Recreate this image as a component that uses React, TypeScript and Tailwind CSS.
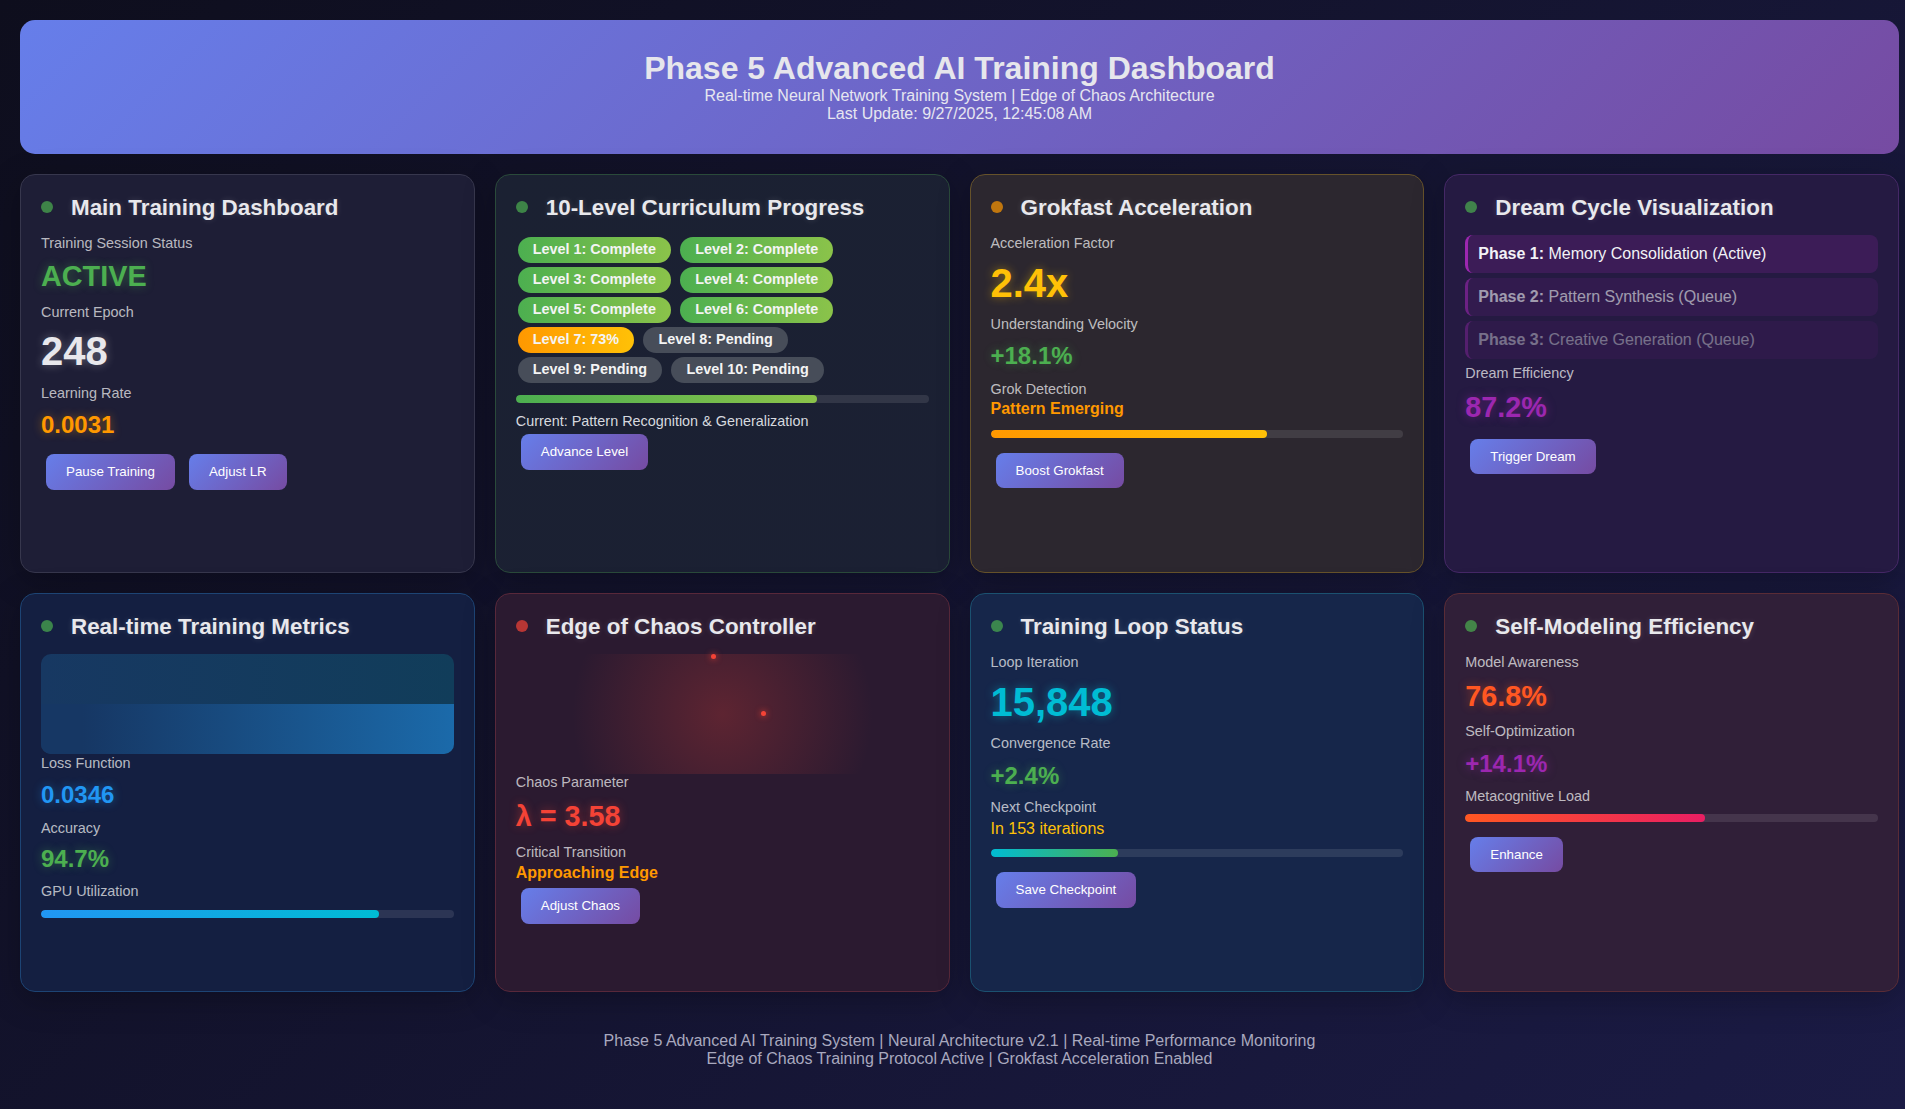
import type { ReactNode } from 'react'

const glow = {
  green: 'text-[#4caf50] [text-shadow:0_0_10px_rgba(76,175,80,0.45)]',
  white: 'text-[#e8e8ec] [text-shadow:0_0_10px_rgba(255,255,255,0.3)]',
  orange: 'text-[#ff9800] [text-shadow:0_0_10px_rgba(255,152,0,0.45)]',
  yellow: 'text-[#ffc107] [text-shadow:0_0_10px_rgba(255,193,7,0.45)]',
  purple: 'text-[#9c27b0] [text-shadow:0_0_10px_rgba(156,39,176,0.5)]',
  blue: 'text-[#2196f3] [text-shadow:0_0_10px_rgba(33,150,243,0.45)]',
  red: 'text-[#f44336] [text-shadow:0_0_10px_rgba(244,67,54,0.45)]',
  cyan: 'text-[#00bcd4] [text-shadow:0_0_10px_rgba(0,188,212,0.45)]',
  deepOrange: 'text-[#ff5722] [text-shadow:0_0_10px_rgba(255,87,34,0.45)]',
}

function Card({ tone, dot, title, children }: { tone: string; dot: string; title: string; children: ReactNode }) {
  return (
    <div className={`h-[399px] rounded-[15px] border p-5 shadow-[0_8px_32px_rgba(0,0,0,0.25)] ${tone}`}>
      <div className="flex items-center gap-[18px] mb-[15px]">
        <span className={`w-3 h-3 rounded-full opacity-70 ${dot}`} />
        <h3 className="text-[22.4px] leading-[1.15] font-bold text-[#e8e8ec] [text-shadow:0_0_6px_rgba(255,255,255,0.15)]">{title}</h3>
      </div>
      {children}
    </div>
  )
}

function Label({ children, className = '' }: { children: ReactNode; className?: string }) {
  return <div className={`text-[14.4px] leading-[1.15] text-white/70 ${className}`}>{children}</div>
}

function Bar({ pct, fill, className = '' }: { pct: number; fill: string; className?: string }) {
  return (
    <div className={`h-2 rounded-full bg-white/10 overflow-hidden ${className}`}>
      <div className={`h-full rounded-full ${fill}`} style={{ width: `${pct}%` }} />
    </div>
  )
}

function Buttons({ labels, className = '' }: { labels: string[]; className?: string }) {
  return (
    <div className={`flex gap-1 ${className}`}>
      {labels.map((l) => (
        <button
          key={l}
          className="m-[5px] px-5 py-[10px] rounded-lg text-[13.33px] leading-[1.15] text-white bg-[linear-gradient(135deg,#667eea_0%,#764ba2_100%)]"
        >
          {l}
        </button>
      ))}
    </div>
  )
}

const levels = [
  { t: 'Level 1: Complete', s: 'done' },
  { t: 'Level 2: Complete', s: 'done' },
  { t: 'Level 3: Complete', s: 'done' },
  { t: 'Level 4: Complete', s: 'done' },
  { t: 'Level 5: Complete', s: 'done' },
  { t: 'Level 6: Complete', s: 'done' },
  { t: 'Level 7: 73%', s: 'current' },
  { t: 'Level 8: Pending', s: 'pending' },
  { t: 'Level 9: Pending', s: 'pending' },
  { t: 'Level 10: Pending', s: 'pending' },
]

const badgeTone: Record<string, string> = {
  done: 'bg-[linear-gradient(90deg,#4caf50,#8bc34a)]',
  current: 'bg-[linear-gradient(90deg,#ff9800,#ffc107)]',
  pending: 'bg-[#474d59]',
}

export default function App() {
  return (
    <div className="min-h-screen bg-[linear-gradient(135deg,#0e0e1d_0%,#1b1b45_100%)] font-['Liberation_Sans',Arial,Helvetica,sans-serif] pl-5 pt-5 pb-[41px]">
      <div className="w-[1879px]">
        {/* header */}
        <header className="rounded-[15px] p-[30px] text-center bg-[linear-gradient(135deg,#667eea_0%,#764ba2_100%)]">
          <h1 className="text-[32px] leading-[1.15] font-bold text-[#e6e6ec]">Phase 5 Advanced AI Training Dashboard</h1>
          <p className="text-[16px] leading-[1.15] text-[#e6e6f0]">Real-time Neural Network Training System | Edge of Chaos Architecture</p>
          <p className="text-[16px] leading-[1.15] text-[#e6e6f0]">Last Update: 9/27/2025, 12:45:08 AM</p>
        </header>

        <div className="grid grid-cols-4 gap-5 mt-5">
          {/* Main training */}
          <Card tone="bg-[#1e1e36] border-[#37374d]" dot="bg-[#4caf50]" title="Main Training Dashboard">
            <Label>Training Session Status</Label>
            <div className={`mt-2 text-[28.8px] font-bold leading-[1.15] ${glow.green}`}>ACTIVE</div>
            <Label className="mt-[11px]">Current Epoch</Label>
            <div className={`mt-[7.5px] text-[40px] font-bold leading-[1.15] ${glow.white}`}>248</div>
            <Label className="mt-[11px]">Learning Rate</Label>
            <div className={`mt-[9px] text-[24px] font-bold leading-[1.15] ${glow.orange}`}>0.0031</div>
            <Buttons className="mt-[11px]" labels={['Pause Training', 'Adjust LR']} />
          </Card>

          {/* Curriculum */}
          <Card tone="bg-[linear-gradient(135deg,#1b2132,#1b2033)] border-[#2a4a3a]" dot="bg-[#4caf50]" title="10-Level Curriculum Progress">
            <div className="flex flex-wrap gap-x-[9.3px] gap-y-[4.7px] pl-[2px] pt-[2px]">
              {levels.map((l) => (
                <span
                  key={l.t}
                  className={`h-[25.3px] px-[15px] flex items-center rounded-full text-[14.4px] font-bold text-[#f4f4f4] ${badgeTone[l.s]}`}
                >
                  {l.t}
                </span>
              ))}
            </div>
            <Bar className="mt-[12.5px]" pct={73} fill="bg-[linear-gradient(90deg,#4caf50,#8bc34a)]" />
            <div className="mt-[9.7px] text-[14.4px] leading-[1.15] text-[#d6d9df]">Current: Pattern Recognition &amp; Generalization</div>
            <Buttons labels={['Advance Level']} />
          </Card>

          {/* Grokfast */}
          <Card tone="bg-[#2c272f] border-[#66522a]" dot="bg-[#ff9800]" title="Grokfast Acceleration">
            <Label>Acceleration Factor</Label>
            <div className={`mt-2 text-[40px] font-bold leading-[1.15] ${glow.yellow}`}>2.4x</div>
            <Label className="mt-[10.5px]">Understanding Velocity</Label>
            <div className={`mt-[9.5px] text-[24px] font-bold leading-[1.15] ${glow.green}`}>+18.1%</div>
            <Label className="mt-[10.5px]">Grok Detection</Label>
            <div className="mt-[3.3px] text-[16px] font-bold leading-[1.15] text-[#ff9800]">Pattern Emerging</div>
            <Bar className="mt-[11px]" pct={67} fill="bg-[linear-gradient(90deg,#ff9800,#ffc107)]" />
            <Buttons className="mt-[10px]" labels={['Boost Grokfast']} />
          </Card>

          {/* Dream cycle */}
          <Card tone="bg-[#251a42] border-[#452866]" dot="bg-[#4caf50]" title="Dream Cycle Visualization">
            <div className="flex flex-col gap-[5.5px]">
              {[
                { p: 'Phase 1:', d: 'Memory Consolidation (Active)', o: 'opacity-100' },
                { p: 'Phase 2:', d: 'Pattern Synthesis (Queue)', o: 'opacity-60' },
                { p: 'Phase 3:', d: 'Creative Generation (Queue)', o: 'opacity-40' },
              ].map((ph) => (
                <div
                  key={ph.p}
                  className={`rounded-lg border-l-[3px] border-[#9c27b0] bg-[#9c27b0]/20 pl-[10px] py-[9.5px] text-[16px] leading-[1.15] text-[#f2f2f6] ${ph.o}`}
                >
                  <b>{ph.p}</b> {ph.d}
                </div>
              ))}
            </div>
            <Label className="mt-[6px]">Dream Efficiency</Label>
            <div className={`mt-[9.5px] text-[28.8px] font-bold leading-[1.15] ${glow.purple}`}>87.2%</div>
            <Buttons className="mt-[10px]" labels={['Trigger Dream']} />
          </Card>

          {/* Real-time metrics */}
          <Card tone="bg-[#141f41] border-[#1d4474]" dot="bg-[#4caf50]" title="Real-time Training Metrics">
            <div className="mt-px h-[100px] rounded-[10px] overflow-hidden flex flex-col justify-end bg-[linear-gradient(90deg,#173862,#113d5a)]">
              <div className="h-1/2 bg-[linear-gradient(90deg,#163764_10%,#1b6aaa_100%)]" />
            </div>
            <Label className="mt-px">Loss Function</Label>
            <div className={`mt-[9px] text-[24px] font-bold leading-[1.15] ${glow.blue}`}>0.0346</div>
            <Label className="mt-[11px]">Accuracy</Label>
            <div className={`mt-[8.6px] text-[24px] font-bold leading-[1.15] ${glow.green}`}>94.7%</div>
            <Label className="mt-[11px]">GPU Utilization</Label>
            <Bar className="mt-[10px]" pct={82} fill="bg-[linear-gradient(90deg,#2196f3,#00bcd4)]" />
          </Card>

          {/* Edge of chaos */}
          <Card tone="bg-[#2b1a30] border-[#58283a]" dot="bg-[#f44336]" title="Edge of Chaos Controller">
            <div className="relative h-[120px] bg-[radial-gradient(circle,rgba(244,67,54,0.25)_0%,transparent_70%)]">
              <span className="absolute left-[195px] top-0 w-[5px] h-[5px] rounded-full bg-[#f44336] shadow-[0_0_6px_#f44336]" />
              <span className="absolute left-[245px] top-[57px] w-[5px] h-[5px] rounded-full bg-[#f44336] shadow-[0_0_6px_#f44336]" />
            </div>
            <Label>Chaos Parameter</Label>
            <div className={`mt-[9px] text-[28.8px] font-bold leading-[1.15] ${glow.red}`}>λ = 3.58</div>
            <Label className="mt-[11px]">Critical Transition</Label>
            <div className="mt-[3.5px] text-[16px] font-bold leading-[1.15] text-[#ff9800]">Approaching Edge</div>
            <Buttons className="mt-px" labels={['Adjust Chaos']} />
          </Card>

          {/* Training loop */}
          <Card tone="bg-[#16264a] border-[#1b5170]" dot="bg-[#4caf50]" title="Training Loop Status">
            <Label className="mt-px">Loop Iteration</Label>
            <div className={`mt-2 text-[40px] font-bold leading-[1.15] ${glow.cyan}`}>15,848</div>
            <Label className="mt-[10.5px]">Convergence Rate</Label>
            <div className={`mt-[9.6px] text-[24px] font-bold leading-[1.15] ${glow.green}`}>+2.4%</div>
            <Label className="mt-[10.2px]">Next Checkpoint</Label>
            <div className="mt-[4px] text-[16px] leading-[1.15] text-[#ffc107]">In 153 iterations</div>
            <Bar className="mt-[10.8px]" pct={31} fill="bg-[linear-gradient(90deg,#00bcd4,#4caf50)]" />
            <Buttons className="mt-[10.3px]" labels={['Save Checkpoint']} />
          </Card>

          {/* Self-modeling */}
          <Card tone="bg-[#301f38] border-[#5a2c36]" dot="bg-[#4caf50]" title="Self-Modeling Efficiency">
            <Label className="mt-px">Model Awareness</Label>
            <div className={`mt-[8.8px] text-[28.8px] font-bold leading-[1.15] ${glow.deepOrange}`}>76.8%</div>
            <Label className="mt-[10.5px]">Self-Optimization</Label>
            <div className={`mt-[10px] text-[24px] font-bold leading-[1.15] ${glow.purple}`}>+14.1%</div>
            <Label className="mt-[10.3px]">Metacognitive Load</Label>
            <Bar className="mt-[9.3px]" pct={58} fill="bg-[linear-gradient(90deg,#ff5722,#e91e63)]" />
            <Buttons className="mt-[10.3px]" labels={['Enhance']} />
          </Card>
        </div>

        {/* footer */}
        <footer className="mt-10 text-center text-[16px] leading-[1.15] text-[#a9a9bf]">
          <p>Phase 5 Advanced AI Training System | Neural Architecture v2.1 | Real-time Performance Monitoring</p>
          <p>Edge of Chaos Training Protocol Active | Grokfast Acceleration Enabled</p>
        </footer>
      </div>
    </div>
  )
}
